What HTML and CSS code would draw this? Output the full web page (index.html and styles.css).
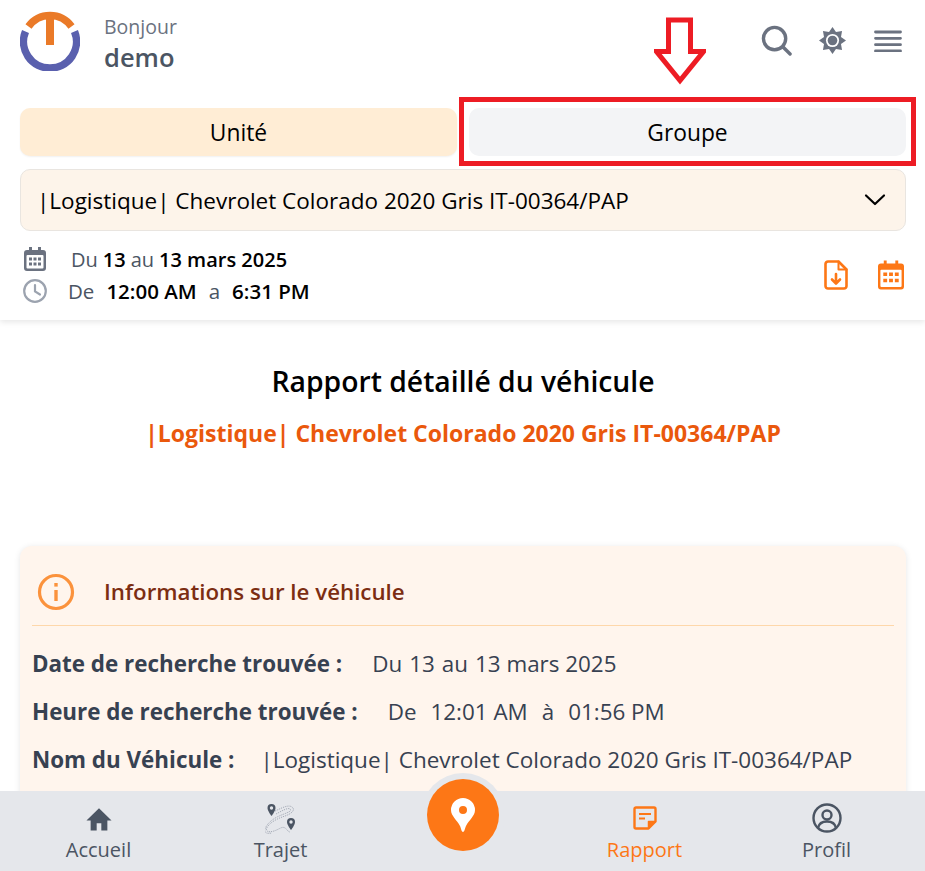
FILE: index.html
```html
<!DOCTYPE html>
<html lang="fr">
<head>
<meta charset="utf-8">
<title>Rapport détaillé du véhicule</title>
<link rel="stylesheet" href="styles.css">
</head>
<body>
<div class="app">
  <header class="header">
    <div class="top">
      <svg class="logo" viewBox="0 0 60 60" fill="none">
        <path d="M5.500 20.500A26.500 26.500 0 1 0 54.500 20.500" stroke="#5a60ae" stroke-width="7.500"/>
        <path d="M8.500 15.500A26.500 26.500 0 0 1 51.500 15.500" stroke="#ea7a28" stroke-width="7.500"/>
        <rect x="26" y="2" width="8" height="32" fill="#ea7a28"/>
      </svg>
      <div class="hello">
        <div class="hello-small">Bonjour</div>
        <div class="hello-name">demo</div>
      </div>
      <div class="top-icons">
        <svg class="icon-search" viewBox="0 0 32 32" fill="none" stroke="#6b7280" stroke-width="3.500" stroke-linecap="round"><circle cx="14" cy="14" r="11.500"/><path d="M23 23l7 7"/></svg>
        <svg class="icon-sun" viewBox="0 0 28 28"><path fill="#6b7280" d="M14 0L17.600 5.200 23.900 4.100 22.800 10.400 28 14 22.800 17.600 23.900 23.900 17.600 22.800 14 28 10.400 22.800 4.100 23.900 5.200 17.600 0 14 5.200 10.400 4.100 4.100 10.400 5.200z"/><circle cx="14" cy="14" r="6.800" fill="#fff"/><circle cx="14" cy="14" r="5" fill="#6b7280"/></svg>
        <svg class="icon-menu" viewBox="0 0 28 22" fill="none" stroke="#6b7280" stroke-width="2.800" stroke-linecap="round"><path d="M1.500 2h25M1.500 8.300h25M1.500 14.700h25M1.500 21h25"/></svg>
      </div>
    </div>
    <div class="tabs">
      <div class="tab tab-active">Unité</div>
      <div class="tab tab-idle">Groupe</div>
    </div>
    <div class="select">
      <span>|Logistique| Chevrolet Colorado 2020 Gris IT-00364/PAP</span>
      <svg class="chevron" viewBox="0 0 22 14" fill="none" stroke="#000" stroke-width="2.200" stroke-linecap="round" stroke-linejoin="round"><path d="M2 2.500l9 8.500 9-8.500"/></svg>
    </div>
    <div class="range">
      <div class="range-lines">
        <div class="range-line line-date">
          <svg class="range-ico" viewBox="0 0 22 24"><path fill="#6b7280" d="M5 0h3v3h6V0h3v3h2a3 3 0 0 1 3 3v15a3 3 0 0 1-3 3H3a3 3 0 0 1-3-3V6a3 3 0 0 1 3-3h2z"/><rect x="2.500" y="8" width="17" height="13.500" rx="1" fill="#fff"/><path fill="#6b7280" d="M5 10.500h3v3H5zM9.500 10.500h3v3h-3zM14 10.500h3v3h-3zM5 15.500h3v3H5zM9.500 15.500h3v3h-3zM14 15.500h3v3h-3z"/></svg>
          <span class="muted">Du</span><b>13</b><span class="muted">au</span><b>13 mars 2025</b>
        </div>
        <div class="range-line line-time">
          <svg class="clock-ico" viewBox="0 0 24 24" fill="none" stroke="#9ca3af" stroke-width="2.200" stroke-linecap="round"><circle cx="12" cy="12" r="10.800"/><path d="M12 6v6.500l5 3"/></svg>
          <span class="muted">De</span><b>12:00 AM</b><span class="muted">a</span><b>6:31 PM</b>
        </div>
      </div>
      <div class="range-actions">
        <svg class="act-file" viewBox="0 0 24 30" fill="none" stroke="#fd7716" stroke-width="2.600" stroke-linejoin="round" stroke-linecap="round"><path d="M4 1.500h10.500l8 8V26a2.500 2.500 0 0 1-2.500 2.500H4A2.500 2.500 0 0 1 1.500 26V4A2.500 2.500 0 0 1 4 1.500z"/><path d="M14.500 1.500v8h8" stroke-width="2"/><path d="M12 14v9M8 19.500l4 4 4-4"/></svg>
        <svg class="act-cal" viewBox="0 0 27 30"><path fill="#fd7716" d="M6 0h3v3h9V0h3v3h3a3 3 0 0 1 3 3v21a3 3 0 0 1-3 3H3a3 3 0 0 1-3-3V6a3 3 0 0 1 3-3h3z"/><rect x="2.500" y="9.500" width="22" height="18" rx="1" fill="#fff"/><path fill="#fd7716" d="M5.500 12.500h4v3.500h-4zM11.500 12.500h4v3.500h-4zM17.500 12.500h4v3.500h-4zM5.500 19h4v3.500h-4zM11.500 19h4v3.500h-4zM17.500 19h4v3.500h-4z"/></svg>
      </div>
    </div>
  </header>

  <main class="main">
    <h1 class="title">Rapport détaillé du véhicule</h1>
    <p class="subtitle">|Logistique| Chevrolet Colorado 2020 Gris IT-00364/PAP</p>
    <section class="card">
      <div class="card-head">
        <svg class="info" viewBox="0 0 38 38" fill="none" stroke="#fb923c" stroke-width="3.200"><circle cx="19" cy="19" r="16.500"/><path d="M19 17v11" stroke-width="3.400"/><path d="M19 10v3.600" stroke-width="3.400"/></svg>
        <h2 class="card-title">Informations sur le véhicule</h2>
      </div>
      <div class="row"><b class="label">Date de recherche trouvée :</b><span class="val val-date"><span>Du</span><span>13</span><span>au</span><span>13 mars 2025</span></span></div>
      <div class="row"><b class="label">Heure de recherche trouvée :</b><span class="val val-time"><span>De</span><span>12:01 AM</span><span>à</span><span>01:56 PM</span></span></div>
      <div class="row"><b class="label label-name">Nom du Véhicule :</b><span class="val-name">|Logistique| Chevrolet Colorado 2020 Gris IT-00364/PAP</span></div>
    </section>
  </main>

  <nav class="nav">
    <div class="nav-item">
      <svg class="nav-ico home" viewBox="0 0 28 28"><path fill="#4b5563" d="M14 2.500L0.500 15.500H5V26.500H11.500V18.500H16.500V26.500H23V15.500H27.500z"/></svg>
      <span>Accueil</span>
    </div>
    <div class="nav-item">
      <svg class="nav-ico trajet" viewBox="0 0 32 32" fill="none" stroke="#9ca3af" stroke-width=".9" stroke-dasharray="1.200 1"><path d="M10 9C15 7 23 2 27 5S26 12 20 14 7 19 3 24 3 31 9 29 17 24 20 26 23 30 25 30"/><path d="M11 12C15 10 23 5 25 7S24 10 19 12 6 17 1.500 24 2 32 7 31"/><path stroke="none" fill="#4b5563" d="M6.500 2a4 4 0 0 1 4 4C10.500 9 6.500 14 6.500 14S2.500 9 2.500 6A4 4 0 0 1 6.500 2z"/><circle stroke="none" cx="6.500" cy="6" r="1.700" fill="#e5e7eb"/><path stroke="none" fill="#4b5563" d="M26 16a4 4 0 0 1 4 4C30 23 26 28 26 28S22 23 22 20A4 4 0 0 1 26 16z"/><circle stroke="none" cx="26" cy="20" r="1.700" fill="#e5e7eb"/></svg>
      <span>Trajet</span>
    </div>
    <div class="nav-item nav-center">
      <div class="fab">
        <svg class="pin" viewBox="0 0 24 34"><path fill="#fff" fill-rule="evenodd" d="M12 0a12 12 0 0 1 12 12c0 6-6 10-9 16-1 2-1.500 6-3 6s-2-4-3-6C6 22 0 18 0 12A12 12 0 0 1 12 0zm0 8a4 4 0 1 0 0 8 4 4 0 0 0 0-8z"/></svg>
      </div>
    </div>
    <div class="nav-item nav-on">
      <svg class="nav-ico report" viewBox="0 0 24 24" fill="none" stroke="#fd7716" stroke-width="2.400" stroke-linejoin="round"><path d="M3 1.500h18A1.500 1.500 0 0 1 22.500 3v12.500l-7 7H3A1.500 1.500 0 0 1 1.500 21V3A1.500 1.500 0 0 1 3 1.500z"/><path d="M6 8h12M6 12.500h6" stroke-width="2"/><path d="M15.500 22.500v-7h7" fill="#fd7716" stroke-width="1.500"/></svg>
      <span>Rapport</span>
    </div>
    <div class="nav-item">
      <svg class="nav-ico" viewBox="0 0 30 30" fill="none" stroke="#4b5563" stroke-width="2.400"><circle cx="15" cy="15" r="13.500"/><circle cx="15" cy="12" r="4.500"/><path d="M6 25c1-5 5-6.500 9-6.500s8 1.500 9 6.500"/></svg>
      <span>Profil</span>
    </div>
  </nav>

  <svg class="mark-arrow" viewBox="0 0 52 68" fill="none" stroke="#ed1c24" stroke-width="5"><path d="M14.500 3h22v31.500h13L26 63.500 2.500 34.500h12z"/></svg>
  <div class="mark-box"></div>
</div>
</body>
</html>
```
FILE: styles.css
```css
* { box-sizing: border-box; }
html, body { margin: 0; padding: 0; background: #fff; }
body { font-family: "Open Sans", "Noto Sans", "Liberation Sans", sans-serif; color: #000; }
.app { position: relative; width: 925px; height: 871px; overflow: hidden; }

.header { height: 320px; padding: 10px 19px 0 20px; background: #fff; box-shadow: 0 2px 6px rgba(0,0,0,.1); position: relative; }
.top { display: flex; align-items: center; height: 61px; }
.logo { width: 60px; height: 60px; }
.hello { margin: 8px 0 0 24px; }
.hello-small { font-size: 19.500px; line-height: 24px; color: #6b7280; }
.hello-name { font-size: 25.500px; line-height: 36px; font-weight: 600; color: #4b5563; }
.top-icons { margin-left: auto; margin-right: 4px; display: flex; align-items: center; }
.icon-search { width: 31px; height: 31px; margin-right: 27px; }
.icon-sun { width: 27px; height: 27px; margin-right: 28px; }
.icon-menu { width: 28px; height: 22px; }

.tabs { display: flex; gap: 12px; margin-top: 37px; }
.tab { flex: 1; height: 48px; padding-top: 1px; border-radius: 10px; display: flex; align-items: center; justify-content: center; font-size: 22.800px; }
.tab-active { background: #ffedd5; box-shadow: 0 1px 2px rgba(0,0,0,.06); }
.tab-idle { background: #f3f4f6; }

.select { margin-top: 13px; height: 62px; padding: 0 19px 0 16px; display: flex; align-items: center; justify-content: space-between; background: #fdf4ea; border: 1px solid #e9e5e0; border-radius: 10px; font-size: 22.500px; }
.chevron { width: 22px; height: 14px; }

.range { display: flex; justify-content: space-between; align-items: center; margin-top: 16px; padding-left: 4px; }
.range-lines { display: flex; flex-direction: column; gap: 8px; }
.range-line { display: flex; align-items: center; height: 24px; font-size: 20.500px; white-space: pre; }
.range-line b { font-weight: 600; color: #000; }
.line-date { gap: 5px; font-size: 20px; }
.line-time { gap: 12px; }
.muted { color: #4b5563; }
.range-ico { width: 22px; height: 24px; margin-right: 20px; }
.clock-ico { width: 24px; height: 24px; margin: 0 9px 0 -1px; }
.range-actions { display: flex; align-items: center; gap: 30px; margin: 0 2px 0 0; }
.act-file { width: 24px; height: 30px; }
.act-cal { width: 26px; height: 30px; }

.main { padding: 0 19px 0 20px; }
.title { margin: 43px 0 0; height: 36px; line-height: 36px; text-align: center; font-size: 28.300px; font-weight: 600; }
.subtitle { margin: 19px 0 0; height: 30px; line-height: 30px; text-align: center; font-size: 23px; font-weight: 700; color: #ea580c; }
.card { margin-top: 98px; padding: 0 12px; height: 400px; background: #fff5ed; border-radius: 12px; box-shadow: 0 1px 6px rgba(0,0,0,.1); }
.card-head { display: flex; align-items: center; height: 80px; border-bottom: 1px solid #fed7aa; padding: 12px 0 0 5px; }
.info { width: 38px; height: 38px; }
.card-title { margin: 0 0 0 29px; font-size: 22.300px; font-weight: 600; color: #7c2d12; }
.row { display: flex; align-items: center; height: 48px; font-size: 22.400px; color: #374151; white-space: nowrap; }
.row:nth-of-type(2) { margin-top: 13px; }
.label { font-weight: 700; margin-right: 30px; }
.label-name { margin-right: 26px; }
.val { display: flex; }
.val-date { gap: 7px; }
.val-time { gap: 14px; }
.val-name { font-size: 22.500px; }

.nav { position: absolute; left: 0; right: 0; bottom: 0; height: 80px; padding: 0 7.500px; display: flex; background: #e5e7eb; }
.nav-item { flex: 1; display: flex; flex-direction: column; align-items: center; font-size: 20px; color: #4b5563; position: relative; }
.nav-item span { position: absolute; top: 45px; line-height: 28px; }
.nav-ico { width: 30px; height: 30px; margin-top: 12px; }
.home { width: 26px; height: 26px; margin-top: 15px; }
.trajet { width: 32px; height: 32px; margin-top: 11px; }
.report { width: 24px; height: 24px; margin-top: 15px; }
.nav-on { color: #fd7716; }
.fab { position: absolute; top: -18px; left: 50%; margin-left: -42px; width: 84px; height: 84px; padding: 6px; border-radius: 50%; background: #e5e7eb; }
.fab::after { content: ""; display: block; width: 72px; height: 72px; border-radius: 50%; background: #fd7716; }
.pin { position: absolute; left: 30px; top: 25px; width: 24px; height: 34px; }

.mark-arrow { position: absolute; left: 654px; top: 17px; width: 52px; height: 68px; }
.mark-box { position: absolute; left: 459px; top: 97px; width: 457px; height: 69px; border: 5px solid #ed1c24; }
```
